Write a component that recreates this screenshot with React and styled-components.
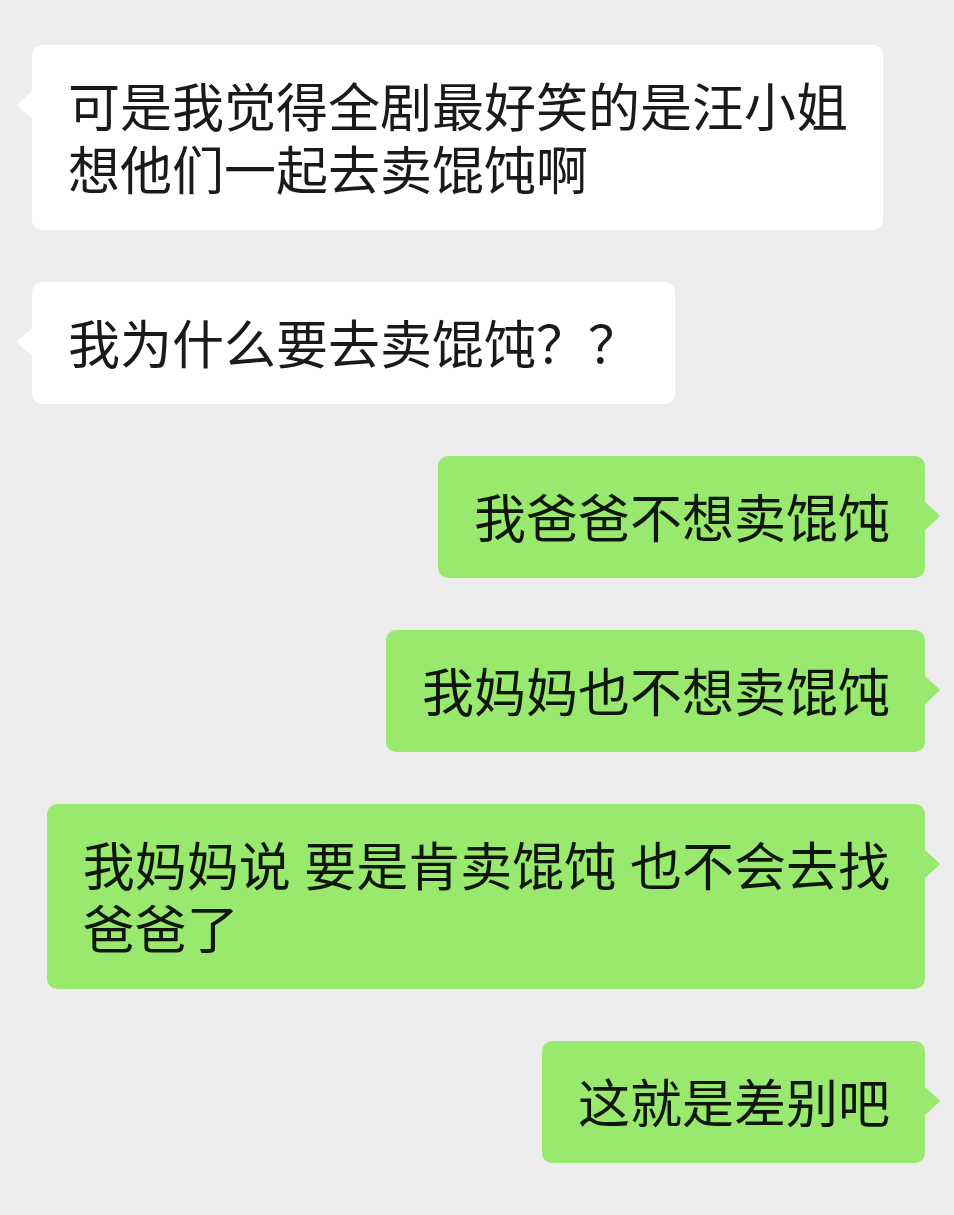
import React from "react";
import styled, { createGlobalStyle } from "styled-components";

const messages = [
  { side: "left", lines: ["可是我觉得全剧最好笑的是汪小姐", "想他们一起去卖馄饨啊"] },
  { side: "left", lines: ["我为什么要去卖馄饨？？"] },
  { side: "right", lines: ["我爸爸不想卖馄饨"] },
  { side: "right", lines: ["我妈妈也不想卖馄饨"] },
  { side: "right", lines: ["我妈妈说 要是肯卖馄饨 也不会去找", "爸爸了"] },
  { side: "right", lines: ["这就是差别吧"] },
];

function App() {
  return (
    <>
      <GlobalStyle />
      <Chat>
        {messages.map((msg, i) => (
          <Row key={i} side={msg.side}>
            <Bubble side={msg.side}>
              {msg.lines.map((line, j) => (
                <Line key={j}>{line}</Line>
              ))}
            </Bubble>
          </Row>
        ))}
      </Chat>
    </>
  );
}

export default App;

const GlobalStyle = createGlobalStyle`
  html, body {
    margin: 0;
    padding: 0;
    background-color: #ededed;
  }
`;

const Chat = styled.div`
  width: 954px;
  min-height: 1215px;
  box-sizing: border-box;
  background-color: #ededed;
  padding: 45px 29px 0 32px;
  display: flex;
  flex-direction: column;
  gap: 52px;
  font-family: "Noto Sans CJK SC", "Noto Sans", sans-serif;
`;

const Row = styled.div`
  display: flex;
  justify-content: ${(p) => (p.side === "right" ? "flex-end" : "flex-start")};
`;

const Bubble = styled.div`
  position: relative;
  background-color: ${(p) => (p.side === "right" ? "#98e96d" : "#ffffff")};
  color: ${(p) => (p.side === "right" ? "#0f160b" : "#1a1a1a")};
  border-radius: 10px;
  padding: 28px 35px 31px 36px;
  font-size: 52px;
  line-height: 63px;
  word-spacing: 2px;

  &::before {
    content: "";
    position: absolute;
    top: 45px;
    ${(p) => (p.side === "right" ? "right: -15px;" : "left: -15px;")}
    width: 16px;
    height: 30px;
    background-color: inherit;
    clip-path: ${(p) =>
      p.side === "right"
        ? "polygon(0 0, 85% 42%, 100% 50%, 85% 58%, 0 100%)"
        : "polygon(100% 0, 15% 42%, 0 50%, 15% 58%, 100% 100%)"};
  }
`;

const Line = styled.div`
  white-space: nowrap;
`;
